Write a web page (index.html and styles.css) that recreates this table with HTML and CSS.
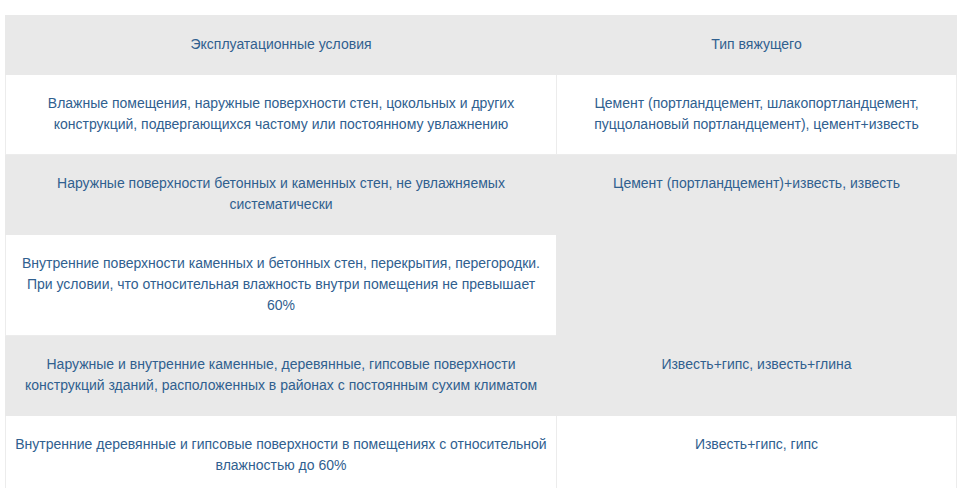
FILE: index.html
```html
<!DOCTYPE html>
<html lang="ru">
<head>
<meta charset="utf-8">
<link rel="stylesheet" href="styles.css">
</head>
<body>
<table class="tbl">
  <colgroup><col class="c1"><col class="c2"></colgroup>
  <tr class="gray">
    <td>Эксплуатационные условия</td>
    <td>Тип вяжущего</td>
  </tr>
  <tr>
    <td>Влажные помещения, наружные поверхности стен, цокольных и других конструкций, подвергающихся частому или постоянному увлажнению</td>
    <td>Цемент (портландцемент, шлакопортландцемент, пуццолановый портландцемент), цемент+известь</td>
  </tr>
  <tr class="gray">
    <td>Наружные поверхности бетонных и каменных стен, не увлажняемых систематически</td>
    <td rowspan="2">Цемент (портландцемент)+известь, известь</td>
  </tr>
  <tr>
    <td>Внутренние поверхности каменных и бетонных стен, перекрытия, перегородки. При условии, что относительная влажность внутри помещения не превышает 60%</td>
  </tr>
  <tr class="gray">
    <td>Наружные и внутренние каменные, деревянные, гипсовые поверхности конструкций зданий, расположенных в районах с постоянным сухим климатом</td>
    <td>Известь+гипс, известь+глина</td>
  </tr>
  <tr>
    <td>Внутренние деревянные и гипсовые поверхности в помещениях с относительной влажностью до 60%</td>
    <td>Известь+гипс, гипс</td>
  </tr>
</table>
</body>
</html>
```
FILE: styles.css
```css
html, body {
  margin: 0;
  background: #fff;
}
body {
  padding: 15px 0 0 5px;
  font-family: "Liberation Sans", Arial, sans-serif;
  font-size: 14px;
  line-height: 21px;
  color: #30608f;
}
.tbl {
  border-collapse: collapse;
  width: 951px;
  table-layout: fixed;
  border: 1px solid #f1f1f1;
}
.c1 { width: 551px; }
.c2 { width: 400px; }
.tbl td {
  padding: 18px 8px 19px 8px;
  text-align: center;
  vertical-align: top;
  border: 1px solid #ececec;
  background: #fff;
}
.gray td,
.tbl td[rowspan] {
  background: #e9e9e9;
  border-color: #e9e9e9;
}
```
